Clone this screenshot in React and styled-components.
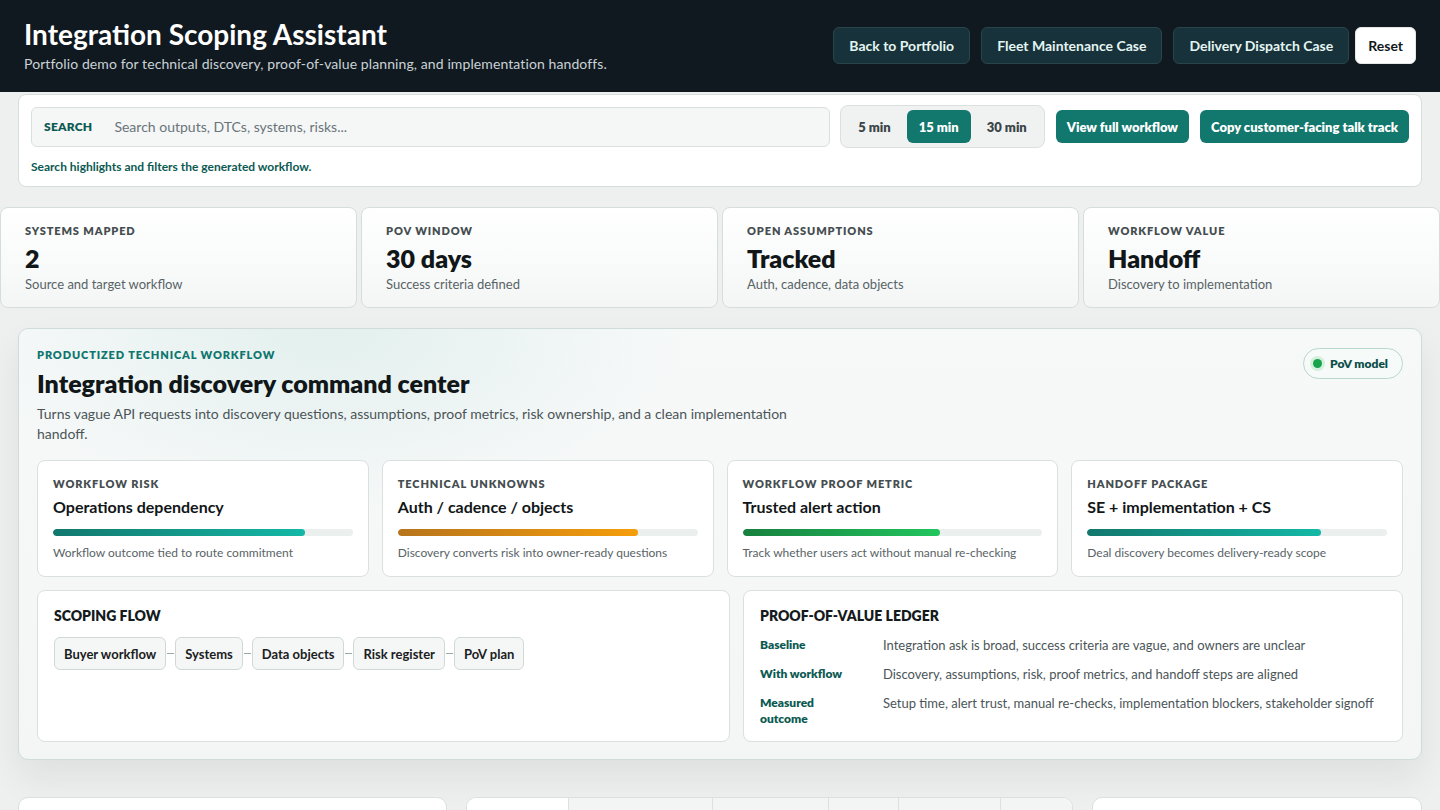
import React from "react";
import styled, { createGlobalStyle } from "styled-components";

const GlobalStyle = createGlobalStyle`
  * { box-sizing: border-box; }
  body {
    margin: 0;
    background: #eef0ef;
    font-family: Lato, "Noto Sans", sans-serif;
    color: #14191b;
  }
`;

const Page = styled.div`
  min-height: 100vh;
  background: #eef0ef;
`;

/* ---------- top bar ---------- */
const TopBar = styled.header`
  height: 92px;
  background: #111920;
  display: flex;
  align-items: center;
  justify-content: space-between;
  padding: 0 24px;
`;

const Brand = styled.div`
  display: flex;
  flex-direction: column;
  margin-top: -2px;
`;

const AppTitle = styled.h1`
  margin: 0;
  font-size: 28px;
  line-height: 34px;
  font-weight: 700;
  color: #ffffff;
`;

const AppSubtitle = styled.p`
  margin: 3px 0 0;
  font-size: 14px;
  line-height: 20px;
  letter-spacing: 0.1px;
  color: #c9d2d6;
`;

const NavGroup = styled.nav`
  display: flex;
  align-items: center;
  gap: 11px;
  margin-top: -1px;
`;

const NavButton = styled.button`
  height: 37px;
  padding: 0 ${(p) => (p.$light ? "12px" : "15px")};
  border-radius: 6px;
  font-family: inherit;
  font-size: 14px;
  font-weight: 700;
  cursor: pointer;
  border: 1px solid ${(p) => (p.$light ? "#e3e7e6" : "#2a4549")};
  background: ${(p) => (p.$light ? "#ffffff" : "#17323a")};
  color: ${(p) => (p.$light ? "#111820" : "#e4f5f2")};
  margin-left: ${(p) => (p.$light ? "-5px" : "0")};
`;

/* ---------- search toolbar ---------- */
const Shell = styled.div`
  padding: 0 18px;
`;

const ToolbarCard = styled.section`
  margin-top: 2px;
  background: #ffffff;
  border: 1px solid #d6dedb;
  border-radius: 8px;
  padding: 10px 12px 11px;
`;

const ToolbarRow = styled.div`
  display: flex;
  align-items: center;
  gap: 11px;
`;

const SearchField = styled.label`
  flex: 1;
  height: 40px;
  display: flex;
  align-items: center;
  gap: 20px;
  padding: 0 12px;
  background: #f5f7f6;
  border: 1px solid #d9e0de;
  border-radius: 6px;
`;

const SearchLabel = styled.span`
  font-size: 12px;
  font-weight: 800;
  color: #0b5a52;
  letter-spacing: 0.02em;
`;

const SearchInput = styled.input`
  flex: 1;
  border: none;
  background: transparent;
  outline: none;
  font-family: inherit;
  font-size: 14px;
  color: #1d2427;
  &::placeholder { color: #69747a; }
`;

const Segments = styled.div`
  display: flex;
  align-items: center;
  gap: 4px;
  height: 43px;
  padding: 0 5px;
  background: #eff2f1;
  border: 1px solid #d9e0de;
  border-radius: 8px;
  margin-left: -1px;
`;

const SegmentButton = styled.button`
  height: 33px;
  padding: 0 12px;
  border: none;
  border-radius: 6px;
  font-family: inherit;
  font-size: 13px;
  font-weight: 800;
  cursor: pointer;
  background: ${(p) => (p.$active ? "#12776d" : "transparent")};
  color: ${(p) => (p.$active ? "#ffffff" : "#3b4447")};
`;

const PrimaryButton = styled.button`
  height: 33px;
  padding: 0 11px;
  border: none;
  border-radius: 6px;
  background: #12776d;
  color: #ffffff;
  font-family: inherit;
  font-size: 13px;
  font-weight: 800;
  cursor: pointer;
`;

const HelperText = styled.p`
  margin: 11px 0 0;
  font-size: 12px;
  line-height: 16px;
  font-weight: 700;
  color: #0b5a52;
`;

/* ---------- stat strip ---------- */
const StatStrip = styled.section`
  margin-top: 20px;
  display: grid;
  grid-template-columns: repeat(4, 1fr);
  gap: 4px;
`;

const StatCard = styled.div`
  background: linear-gradient(180deg, #ffffff 0%, #f4f6f6 100%);
  border: 1px solid #d6dedb;
  border-radius: 8px;
  padding: 16px 24px 14px;
`;

const Kicker = styled.div`
  font-size: 11px;
  line-height: 14px;
  font-weight: 800;
  letter-spacing: 0.08em;
  text-transform: uppercase;
  color: ${(p) => p.$color || "#454d50"};
`;

const StatValue = styled.div`
  margin-top: 5px;
  font-size: 25px;
  line-height: 30px;
  font-weight: 800;
  color: #111618;
`;

const StatNote = styled.div`
  margin-top: 2px;
  font-size: 13px;
  line-height: 18px;
  color: #586366;
`;

/* ---------- workflow panel ---------- */
const Panel = styled.section`
  margin-top: 20px;
  border: 1px solid #cfdcd8;
  border-radius: 10px;
  padding: 19px 18px 17px;
  background:
    radial-gradient(ellipse 520px 260px at 22% 0%, rgba(20, 150, 130, 0.09), transparent 70%),
    linear-gradient(180deg, #f7f9f9 0%, #f3f6f5 100%);
  box-shadow: 0 18px 36px rgba(20, 30, 30, 0.07);
`;

const PanelHead = styled.div`
  display: flex;
  justify-content: space-between;
  align-items: flex-start;
`;

const PanelTitle = styled.h2`
  margin: 6px 0 0;
  font-size: 25px;
  line-height: 30px;
  font-weight: 800;
  color: #111618;
`;

const PanelText = styled.p`
  margin: 6px 0 0;
  max-width: 780px;
  font-size: 14px;
  line-height: 20px;
  color: #4b5558;
`;

const Badge = styled.span`
  display: inline-flex;
  align-items: center;
  gap: 8px;
  height: 31px;
  padding: 0 14px 0 9px;
  border-radius: 999px;
  border: 1px solid #b9d7cd;
  background: #f6faf8;
  font-size: 12px;
  font-weight: 800;
  color: #0c4f49;
`;

const Dot = styled.span`
  width: 9px;
  height: 9px;
  border-radius: 50%;
  background: #16a34a;
  box-shadow: 0 0 0 3px #d5efdd;
`;

const MetricGrid = styled.div`
  margin-top: 16px;
  display: grid;
  grid-template-columns: repeat(4, 1fr);
  gap: 13px;
`;

const MetricCard = styled.div`
  background: #ffffff;
  border: 1px solid #d9e0de;
  border-radius: 8px;
  padding: 16px 15px 15px;
`;

const MetricTitle = styled.div`
  margin-top: 6px;
  font-size: 16px;
  line-height: 20px;
  font-weight: 700;
  color: #111618;
`;

const Track = styled.div`
  margin-top: 12px;
  height: 7px;
  border-radius: 999px;
  background: #ebefee;
  overflow: hidden;
`;

const Fill = styled.div`
  height: 100%;
  border-radius: 999px;
  background: linear-gradient(90deg, ${(p) => p.$from}, ${(p) => p.$to});
`;

const MetricNote = styled.div`
  margin-top: 9px;
  font-size: 12px;
  line-height: 16px;
  color: #586366;
`;

const LowerGrid = styled.div`
  margin-top: 13px;
  display: grid;
  grid-template-columns: 1.05fr 1fr;
  gap: 13px;
`;

const SubCard = styled.div`
  background: #ffffff;
  border: 1px solid #d9e0de;
  border-radius: 8px;
  padding: 16px 16px 14px;
`;

const SubTitle = styled.h3`
  margin: 0;
  font-size: 14px;
  line-height: 18px;
  font-weight: 800;
  color: #151b1d;
`;

const FlowRow = styled.div`
  margin-top: 12px;
  display: flex;
  align-items: center;
`;

const FlowStep = styled.span`
  height: 33px;
  display: inline-flex;
  align-items: center;
  padding: 0 9px;
  border: 1px solid #cfd9d6;
  border-radius: 6px;
  background: #f5f7f6;
  font-size: 13px;
  font-weight: 700;
  color: #1a2022;
`;

const FlowLink = styled.span`
  width: 9px;
  height: 1px;
  background: linear-gradient(90deg, transparent 1px, #98aca7 1px, #98aca7 8px, transparent 8px);
`;

const Ledger = styled.dl`
  margin: 12px 0 0;
  display: grid;
  grid-template-columns: 100px 1fr;
  column-gap: 23px;
  row-gap: 13px;
`;

const LedgerKey = styled.dt`
  font-size: 12px;
  line-height: 16px;
  font-weight: 800;
  color: #0b5a52;
`;

const LedgerValue = styled.dd`
  margin: 0;
  font-size: 13px;
  line-height: 16px;
  color: #4b5558;
`;

/* ---------- next row ---------- */
const NextRow = styled.section`
  margin-top: 37px;
  padding: 0 18px;
  display: grid;
  grid-template-columns: 429px 607px 1fr;
  gap: 19px;
`;

const NextCard = styled.div`
  height: 220px;
  background: #ffffff;
  border: 1px solid #d9e0de;
  border-radius: 10px;
  overflow: hidden;
`;

const TabBar = styled.div`
  display: grid;
  grid-template-columns: 101px 144px 116px 70px 102px 1fr;
  height: 44px;
`;

const Tab = styled.div`
  background: ${(p) => (p.$active ? "#ffffff" : "#f2f5f4")};
  border-left: ${(p) => (p.$first ? "none" : "1px solid #d9e0de")};
  border-bottom: ${(p) => (p.$active ? "none" : "1px solid #d9e0de")};
`;

const stats = [
  { label: "Systems mapped", value: "2", note: "Source and target workflow" },
  { label: "PoV window", value: "30 days", note: "Success criteria defined" },
  { label: "Open assumptions", value: "Tracked", note: "Auth, cadence, data objects" },
  { label: "Workflow value", value: "Handoff", note: "Discovery to implementation" },
];

const metrics = [
  {
    label: "Workflow risk",
    title: "Operations dependency",
    pct: 84,
    from: "#12776d",
    to: "#14b8a6",
    note: "Workflow outcome tied to route commitment",
  },
  {
    label: "Technical unknowns",
    title: "Auth / cadence / objects",
    pct: 80,
    from: "#b7741c",
    to: "#f59e0b",
    note: "Discovery converts risk into owner-ready questions",
  },
  {
    label: "Workflow proof metric",
    title: "Trusted alert action",
    pct: 66,
    from: "#17803f",
    to: "#22c55e",
    note: "Track whether users act without manual re-checking",
  },
  {
    label: "Handoff package",
    title: "SE + implementation + CS",
    pct: 78,
    from: "#12776d",
    to: "#14b8a6",
    note: "Deal discovery becomes delivery-ready scope",
  },
];

const steps = ["Buyer workflow", "Systems", "Data objects", "Risk register", "PoV plan"];

const ledger = [
  ["Baseline", "Integration ask is broad, success criteria are vague, and owners are unclear"],
  ["With workflow", "Discovery, assumptions, risk, proof metrics, and handoff steps are aligned"],
  ["Measured outcome", "Setup time, alert trust, manual re-checks, implementation blockers, stakeholder signoff"],
];

const tabKeys = ["discovery", "assumptions", "risks", "pov", "handoff", "talk"];

export default function App() {
  const [window, setWindow] = React.useState("15 min");
  return (
    <Page>
      <GlobalStyle />
      <TopBar>
        <Brand>
          <AppTitle>Integration Scoping Assistant</AppTitle>
          <AppSubtitle>
            Portfolio demo for technical discovery, proof-of-value planning, and implementation handoffs.
          </AppSubtitle>
        </Brand>
        <NavGroup>
          <NavButton>Back to Portfolio</NavButton>
          <NavButton>Fleet Maintenance Case</NavButton>
          <NavButton>Delivery Dispatch Case</NavButton>
          <NavButton $light>Reset</NavButton>
        </NavGroup>
      </TopBar>

      <Shell>
        <ToolbarCard>
          <ToolbarRow>
            <SearchField>
              <SearchLabel>SEARCH</SearchLabel>
              <SearchInput placeholder="Search outputs, DTCs, systems, risks..." />
            </SearchField>
            <Segments>
              {["5 min", "15 min", "30 min"].map((w) => (
                <SegmentButton key={w} $active={w === window} onClick={() => setWindow(w)}>
                  {w}
                </SegmentButton>
              ))}
            </Segments>
            <PrimaryButton>View full workflow</PrimaryButton>
            <PrimaryButton>Copy customer-facing talk track</PrimaryButton>
          </ToolbarRow>
          <HelperText>Search highlights and filters the generated workflow.</HelperText>
        </ToolbarCard>
      </Shell>

      <StatStrip>
        {stats.map((s) => (
          <StatCard key={s.label}>
            <Kicker>{s.label}</Kicker>
            <StatValue>{s.value}</StatValue>
            <StatNote>{s.note}</StatNote>
          </StatCard>
        ))}
      </StatStrip>

      <Shell>
        <Panel>
          <PanelHead>
            <div>
              <Kicker $color="#0f766e">Productized technical workflow</Kicker>
              <PanelTitle>Integration discovery command center</PanelTitle>
              <PanelText>
                Turns vague API requests into discovery questions, assumptions, proof metrics, risk ownership, and a
                clean implementation handoff.
              </PanelText>
            </div>
            <Badge>
              <Dot />
              PoV model
            </Badge>
          </PanelHead>

          <MetricGrid>
            {metrics.map((m) => (
              <MetricCard key={m.label}>
                <Kicker>{m.label}</Kicker>
                <MetricTitle>{m.title}</MetricTitle>
                <Track>
                  <Fill $from={m.from} $to={m.to} style={{ width: `${m.pct}%` }} />
                </Track>
                <MetricNote>{m.note}</MetricNote>
              </MetricCard>
            ))}
          </MetricGrid>

          <LowerGrid>
            <SubCard>
              <SubTitle>SCOPING FLOW</SubTitle>
              <FlowRow>
                {steps.map((s, i) => (
                  <React.Fragment key={s}>
                    {i > 0 && <FlowLink />}
                    <FlowStep>{s}</FlowStep>
                  </React.Fragment>
                ))}
              </FlowRow>
            </SubCard>
            <SubCard>
              <SubTitle>PROOF-OF-VALUE LEDGER</SubTitle>
              <Ledger>
                {ledger.map(([k, v]) => (
                  <React.Fragment key={k}>
                    <LedgerKey>{k}</LedgerKey>
                    <LedgerValue>{v}</LedgerValue>
                  </React.Fragment>
                ))}
              </Ledger>
            </SubCard>
          </LowerGrid>
        </Panel>
      </Shell>

      <NextRow>
        <NextCard />
        <NextCard>
          <TabBar>
            {tabKeys.map((t, i) => (
              <Tab key={t} $active={i === 0} $first={i === 0} />
            ))}
          </TabBar>
        </NextCard>
        <NextCard />
      </NextRow>
    </Page>
  );
}
